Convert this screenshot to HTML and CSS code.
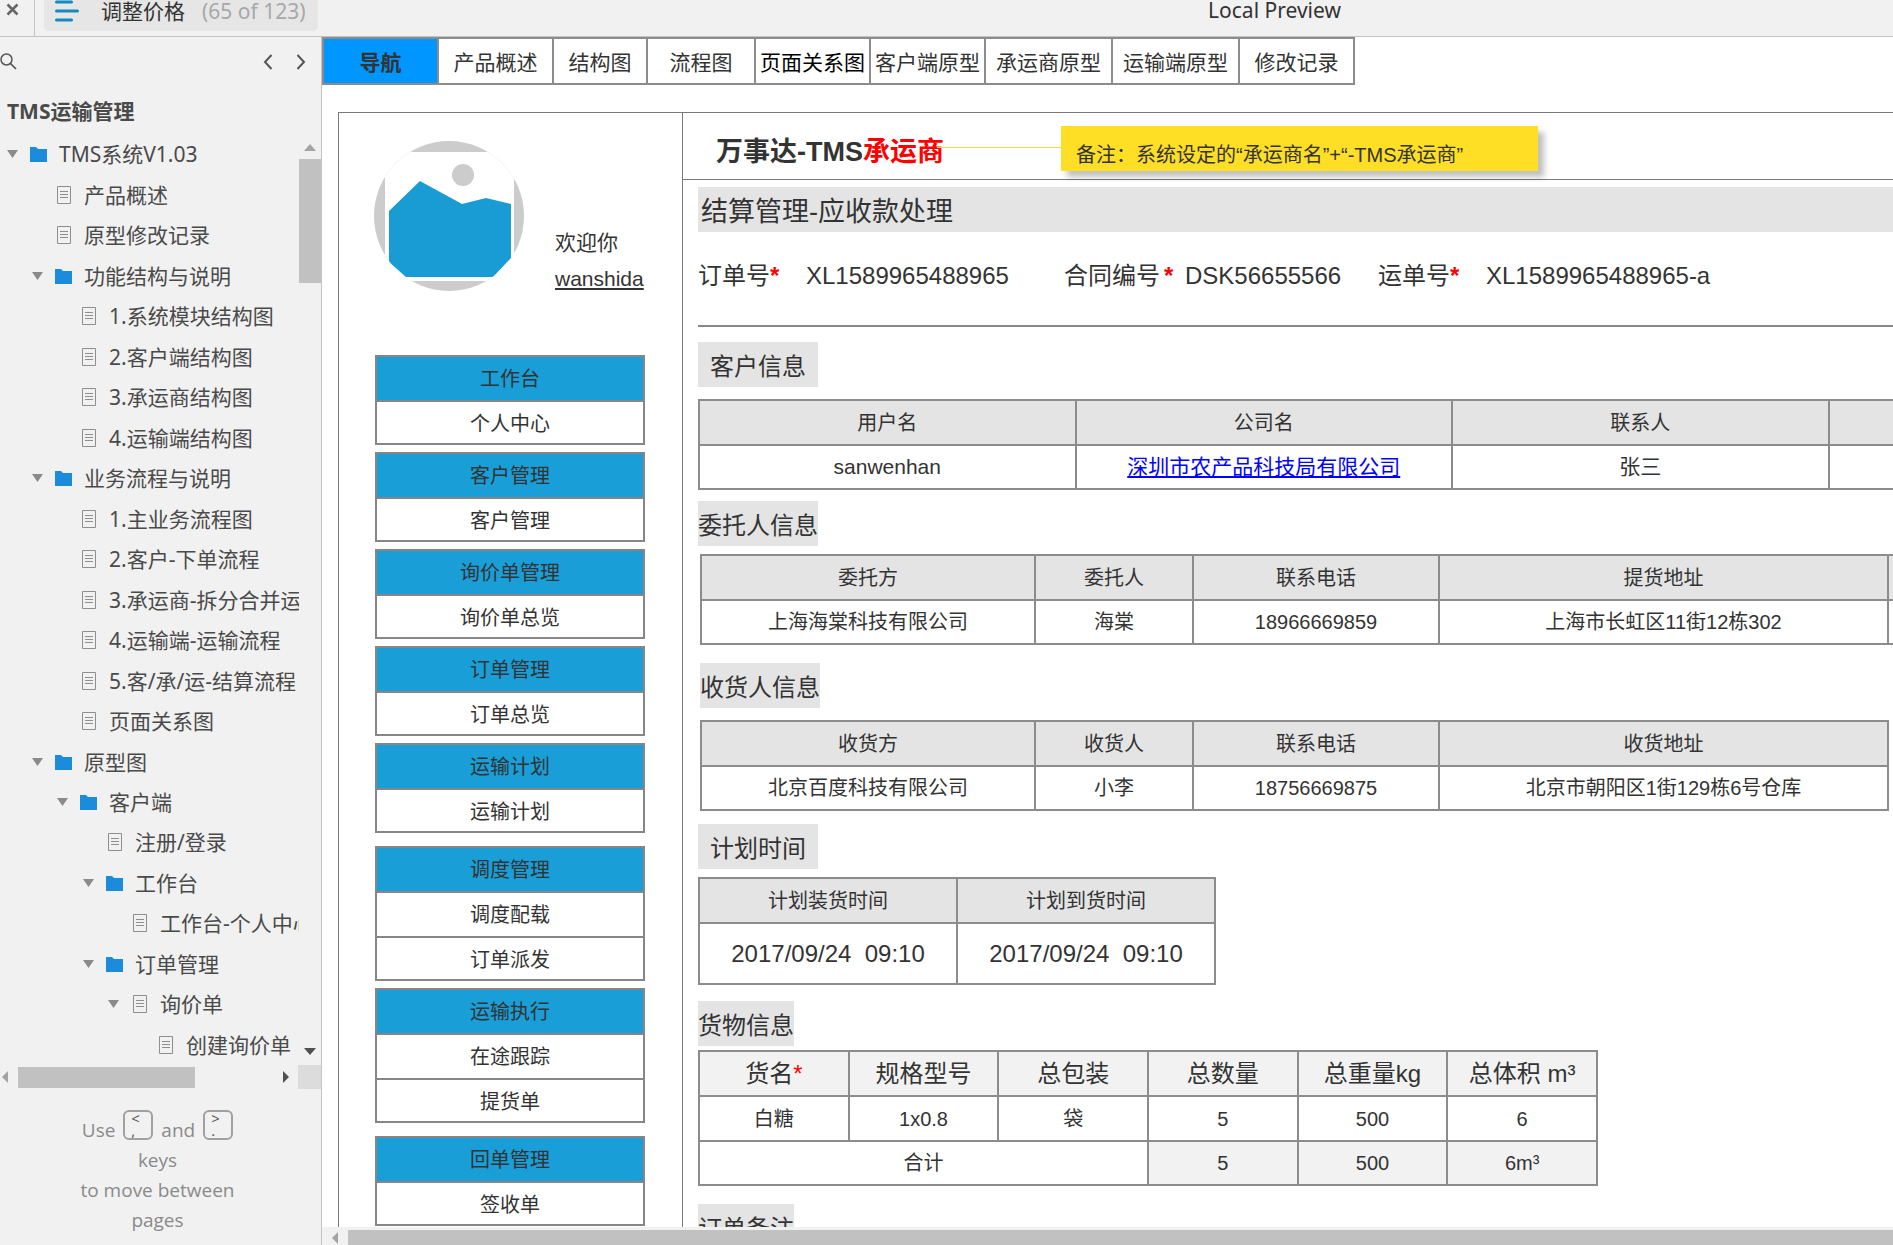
FILE: index.html
```html
<!DOCTYPE html>
<html lang="zh-CN">
<head>
<meta charset="utf-8">
<title>调整价格</title>
<link rel="stylesheet" href="styles.css">
</head>
<body>
<svg class="defs" aria-hidden="true">
  <symbol id="folder" viewBox="0 0 17 16"><path fill="#1a8cdb" d="M0 1h6l2 2h9v13H0z"/></symbol>
  <symbol id="page" viewBox="0 0 14 18"><path fill="none" stroke="#8e8e8e" d="M.5.5h13v17H.5zM3 5.500h8M3 8.500h8M3 11.500h8"/></symbol>
  <symbol id="caret" viewBox="0 0 11 8"><path fill="#8a8a8a" d="M0 0h11L5.500 8z"/></symbol>
</svg>

<header class="topbar">
  <button class="close" aria-label="关闭"><svg width="14" height="14" viewBox="0 0 14 14"><path d="M1.500 1.500l10 10M11.500 1.500l-10 10" stroke="#666" stroke-width="2.500"/></svg></button>
  <div class="pill">
    <svg width="24" height="24" viewBox="0 0 24 24"><path d="M1.500 3h15M1.500 12h21M1.500 21h15" stroke="#128ac4" stroke-width="3" stroke-linecap="round"/></svg>
    <span class="pill-name">调整价格</span>
    <span class="pill-count">(65 of 123)</span>
  </div>
  <div class="preview">Local Preview</div>
</header>

<div class="body">
  <aside class="sidebar">
    <div class="tools">
      <button class="tool" aria-label="搜索"><svg width="17" height="17" viewBox="0 0 17 17"><circle cx="6.500" cy="6.500" r="5.500" fill="none" stroke="#555" stroke-width="1.500"/><path d="M10.500 10.500l5.500 5.500" stroke="#555" stroke-width="1.700"/></svg></button>
      <button class="tool push" aria-label="上一页"><svg width="10" height="16" viewBox="0 0 10 16"><path d="M8.500 1L2 8l6.500 7" fill="none" stroke="#555" stroke-width="2"/></svg></button>
      <button class="tool" aria-label="下一页"><svg width="10" height="16" viewBox="0 0 10 16"><path d="M1.500 1L8 8l-6.500 7" fill="none" stroke="#555" stroke-width="2"/></svg></button>
    </div>
    <h1 class="project">TMS运输管理</h1>
    <div class="tree-area">
      <ul class="tree">
        <li class="l0"><svg class="caret"><use href="#caret"/></svg><svg class="folder"><use href="#folder"/></svg><a href="#">TMS系统V1.03</a></li>
        <li class="l1"><svg class="page"><use href="#page"/></svg><a href="#">产品概述</a></li>
        <li class="l1"><svg class="page"><use href="#page"/></svg><a href="#">原型修改记录</a></li>
        <li class="l1"><svg class="caret"><use href="#caret"/></svg><svg class="folder"><use href="#folder"/></svg><a href="#">功能结构与说明</a></li>
        <li class="l2"><svg class="page"><use href="#page"/></svg><a href="#">1.系统模块结构图</a></li>
        <li class="l2"><svg class="page"><use href="#page"/></svg><a href="#">2.客户端结构图</a></li>
        <li class="l2"><svg class="page"><use href="#page"/></svg><a href="#">3.承运商结构图</a></li>
        <li class="l2"><svg class="page"><use href="#page"/></svg><a href="#">4.运输端结构图</a></li>
        <li class="l1"><svg class="caret"><use href="#caret"/></svg><svg class="folder"><use href="#folder"/></svg><a href="#">业务流程与说明</a></li>
        <li class="l2"><svg class="page"><use href="#page"/></svg><a href="#">1.主业务流程图</a></li>
        <li class="l2"><svg class="page"><use href="#page"/></svg><a href="#">2.客户-下单流程</a></li>
        <li class="l2"><svg class="page"><use href="#page"/></svg><a href="#">3.承运商-拆分合并运</a></li>
        <li class="l2"><svg class="page"><use href="#page"/></svg><a href="#">4.运输端-运输流程</a></li>
        <li class="l2"><svg class="page"><use href="#page"/></svg><a href="#">5.客/承/运-结算流程</a></li>
        <li class="l2"><svg class="page"><use href="#page"/></svg><a href="#">页面关系图</a></li>
        <li class="l1"><svg class="caret"><use href="#caret"/></svg><svg class="folder"><use href="#folder"/></svg><a href="#">原型图</a></li>
        <li class="l2"><svg class="caret"><use href="#caret"/></svg><svg class="folder"><use href="#folder"/></svg><a href="#">客户端</a></li>
        <li class="l3"><svg class="page"><use href="#page"/></svg><a href="#">注册/登录</a></li>
        <li class="l3"><svg class="caret"><use href="#caret"/></svg><svg class="folder"><use href="#folder"/></svg><a href="#">工作台</a></li>
        <li class="l4"><svg class="page"><use href="#page"/></svg><a href="#">工作台-个人中心</a></li>
        <li class="l3"><svg class="caret"><use href="#caret"/></svg><svg class="folder"><use href="#folder"/></svg><a href="#">订单管理</a></li>
        <li class="l4"><svg class="caret"><use href="#caret"/></svg><svg class="page"><use href="#page"/></svg><a href="#">询价单</a></li>
        <li class="l5"><svg class="page"><use href="#page"/></svg><a href="#">创建询价单</a></li>
      </ul>
      <div class="vscroll">
        <svg width="12" height="7" viewBox="0 0 12 7"><path d="M0 7h12L6 0z" fill="#a3a3a3"/></svg>
        <div class="vthumb"></div>
        <svg width="12" height="7" viewBox="0 0 12 7"><path d="M0 0h12L6 7z" fill="#505050"/></svg>
      </div>
    </div>
    <div class="hscroll">
      <svg width="6" height="12" viewBox="0 0 6 12"><path d="M6 0v12L0 6z" fill="#a3a3a3"/></svg>
      <div class="hthumb"></div>
      <svg class="push" width="6" height="12" viewBox="0 0 6 12"><path d="M0 0v12l6-6z" fill="#505050"/></svg>
      <div class="corner"></div>
    </div>
    <div class="hint">
      <div class="hint-keys"><span>Use</span><kbd><span>&lt;</span><span>,</span></kbd><span>and</span><kbd><span>&gt;</span><span>.</span></kbd></div>
      <div>keys</div>
      <div>to move between</div>
      <div>pages</div>
    </div>
  </aside>

  <main class="main">
    <div class="canvas">
      <nav class="tabs">
        <a href="#" class="active">导航</a><a href="#" class="t-m">产品概述</a><a href="#" class="t-s">结构图</a><a href="#" class="t-r">流程图</a><a href="#" class="t-m dark">页面关系图</a><a href="#" class="t-m">客户端原型</a><a href="#" class="t-l">承运商原型</a><a href="#" class="t-l">运输端原型</a><a href="#" class="t-m">修改记录</a>
      </nav>
      <div class="frame">
        <aside class="menu">
          <div class="user">
            <svg class="avatar" width="150" height="150" viewBox="0 0 150 150">
              <defs><clipPath id="disc"><circle cx="75" cy="75" r="75"/></clipPath></defs>
              <g clip-path="url(#disc)">
                <path fill="#ccc" d="M0 0h150v150H0z"/>
                <path fill="#fff" d="M11 11h129v129H11z"/>
                <circle cx="89" cy="34" r="11" fill="#ccc"/>
                <path fill="#199cd4" d="M15 70l31-30 42 23 24-6 25 6v54l-18 19H32l-17-15z"/>
              </g>
            </svg>
            <div class="welcome"><span>欢迎你</span><a href="#">wanshida</a></div>
          </div>
          <div class="groups">
            <section class="group"><h2>工作台</h2><a href="#">个人中心</a></section>
            <section class="group"><h2>客户管理</h2><a href="#">客户管理</a></section>
            <section class="group"><h2>询价单管理</h2><a href="#">询价单总览</a></section>
            <section class="group"><h2>订单管理</h2><a href="#">订单总览</a></section>
            <section class="group apart"><h2>运输计划</h2><a href="#">运输计划</a></section>
            <section class="group"><h2>调度管理</h2><a href="#">调度配载</a><a href="#">订单派发</a></section>
            <section class="group apart"><h2>运输执行</h2><a href="#">在途跟踪</a><a href="#">提货单</a></section>
            <section class="group"><h2>回单管理</h2><a href="#">签收单</a></section>
          </div>
        </aside>

        <div class="content">
          <div class="brand">
            <strong>万事达-TMS<em>承运商</em></strong>
            <div class="note">备注：系统设定的“承运商名”+“-TMS承运商”</div>
          </div>
          <div class="sheet">
            <h2 class="title">结算管理-应收款处理</h2>
            <dl class="order">
              <div class="o-wide"><dt>订单号<b>*</b></dt><dd>XL1589965488965</dd></div>
              <div class="o-tight"><dt>合同编号<b>*</b></dt><dd>DSK56655566</dd></div>
              <div class="o-wide"><dt>运单号<b>*</b></dt><dd>XL1589965488965-a</dd></div>
            </dl>

            <h3 class="badge">客户信息</h3>
            <table class="grid customer">
              <tr><th>用户名</th><th>公司名</th><th>联系人</th><th></th></tr>
              <tr><td>sanwenhan</td><td><a href="#">深圳市农产品科技局有限公司</a></td><td>张三</td><td></td></tr>
            </table>

            <h3 class="badge near">委托人信息</h3>
            <table class="grid party sender">
              <tr><th class="c1">委托方</th><th class="c2">委托人</th><th class="c3">联系电话</th><th class="c4">提货地址</th><th class="c5"></th></tr>
              <tr><td>上海海棠科技有限公司</td><td>海棠</td><td>18966669859</td><td>上海市长虹区11街12栋302</td><td></td></tr>
            </table>

            <h3 class="badge inset">收货人信息</h3>
            <table class="grid party receiver">
              <tr><th class="c1">收货方</th><th class="c2">收货人</th><th class="c3">联系电话</th><th class="c4">收货地址</th></tr>
              <tr><td>北京百度科技有限公司</td><td>小李</td><td>18756669875</td><td>北京市朝阳区1街129栋6号仓库</td></tr>
            </table>

            <h3 class="badge near">计划时间</h3>
            <table class="grid plan">
              <tr><th>计划装货时间</th><th>计划到货时间</th></tr>
              <tr><td>2017/09/24&nbsp; 09:10</td><td>2017/09/24&nbsp; 09:10</td></tr>
            </table>

            <h3 class="badge small">货物信息</h3>
            <table class="grid goods">
              <tr><th>货名<i>*</i></th><th>规格型号</th><th>总包装</th><th>总数量</th><th>总重量kg</th><th>总体积 m³</th></tr>
              <tr><td>白糖</td><td>1x0.8</td><td>袋</td><td>5</td><td>500</td><td>6</td></tr>
              <tr><td colspan="3">合计</td><td class="sum">5</td><td class="sum">500</td><td class="sum">6m³</td></tr>
            </table>

            <h3 class="badge small">订单备注</h3>
          </div>
        </div>
      </div>
    </div>
    <div class="bottom-scroll">
      <svg width="6" height="12" viewBox="0 0 6 12"><path d="M6 0v12L0 6z" fill="#a3a3a3"/></svg>
      <div class="bottom-thumb"></div>
    </div>
  </main>
</div>
</body>
</html>
```
FILE: styles.css
```css
* { box-sizing: border-box; }

body {
  margin: 0;
  height: 100vh;
  overflow: hidden;
  display: flex;
  flex-direction: column;
  background: #fff;
  color: #333;
  font-family: "Liberation Sans", "Noto Sans CJK SC", sans-serif;
  font-size: 20px;
}

h1, h2, h3, ul, dl, dd { margin: 0; padding: 0; font-weight: normal; }
ul { list-style: none; }
a { color: inherit; text-decoration: none; }
button { border: 0; padding: 0; background: none; display: flex; }
svg { display: block; flex: none; }
.defs { position: absolute; width: 0; height: 0; }
.push { margin-left: auto; }

/* Top bar */
.topbar {
  flex: none;
  height: 37px;
  display: flex;
  background: #f1f1f1;
  border-bottom: 1px solid #c4c4c4;
  font-family: "Noto Sans", "Noto Sans CJK SC", sans-serif;
  font-size: 21px;
}
.close {
  width: 35px;
  height: 36px;
  padding: 3px 0 0 6px;
  border-right: 1px solid #c4c4c4;
}
.pill {
  width: 274px;
  height: 31px;
  margin-left: 9px;
  padding: 0 0 10px 11px;
  display: flex;
  align-items: center;
  background: #e6e6e6;
  border-radius: 0 0 5px 5px;
  line-height: 24px;
}
.pill-name { margin-left: 22px; }
.pill-count { margin-left: 17px; color: #a8a8a8; white-space: nowrap; }
.preview {
  flex: 1;
  padding-left: 338px;
  text-align: center;
  line-height: 21px;
}

.body { flex: 1; min-height: 0; display: flex; }

/* Sidebar */
.sidebar {
  flex: none;
  width: 322px;
  display: flex;
  flex-direction: column;
  background: #f1f1f1;
  border-right: 1px solid #c4c4c4;
  color: #4a4a4a;
  font-family: "Noto Sans", "Noto Sans CJK SC", sans-serif;
  font-size: 21px;
}
.tools {
  height: 49px;
  padding-right: 15px;
  display: flex;
  align-items: center;
  gap: 23px;
}
.project {
  height: 48px;
  padding-left: 7px;
  font-size: 21px;
  font-weight: bold;
  line-height: 50px;
}
.tree-area { flex: 1; min-height: 0; display: flex; }
.tree {
  flex: 1;
  min-width: 0;
  overflow: hidden;
  display: flex;
  flex-direction: column;
}
.tree li {
  flex: 1;
  min-height: 0;
  display: flex;
  align-items: center;
  white-space: nowrap;
}
.tree a { line-height: 30px; }
.tree .caret { width: 11px; height: 8px; margin-left: -23px; margin-right: 12px; }
.tree .folder { width: 17px; height: 16px; margin-right: 12px; }
.tree .page { width: 14px; height: 18px; margin-left: 2px; margin-right: 13px; }
.l0 { padding-left: 30px; }
.l1 { padding-left: 55px; }
.l2 { padding-left: 80px; }
.l3 { padding-left: 106px; }
.l4 { padding-left: 131px; }
.l5 { padding-left: 157px; }
.vscroll {
  flex: none;
  width: 22px;
  padding: 10px 0;
  display: flex;
  flex-direction: column;
  align-items: center;
  justify-content: space-between;
}
.vthumb { width: 100%; height: 124px; margin: 8px 0 auto; background: #c1c1c1; }
.hscroll { flex: none; height: 24px; display: flex; align-items: center; padding-left: 2px; }
.hthumb { width: 177px; height: 21px; margin-left: 10px; background: #c1c1c1; }
.corner { width: 23px; height: 24px; margin-left: 9px; background: #dcdcdc; }
.hint {
  flex: none;
  height: 156px;
  padding-top: 21px;
  padding-right: 6px;
  color: #8a8a8a;
  font-family: "Open Sans", sans-serif;
  font-size: 19px;
  line-height: 30px;
  text-align: center;
}
.hint-keys { display: flex; justify-content: center; gap: 8px; height: 35px; }
.hint-keys > span { padding-top: 5px; }
kbd {
  width: 30px;
  height: 30px;
  padding-left: 6px;
  display: flex;
  flex-direction: column;
  border: 2px solid #a0a0a0;
  border-radius: 6px;
  color: #555;
  font-family: "Open Sans", sans-serif;
  font-size: 15px;
  line-height: 12px;
  text-align: left;
}

/* Canvas */
.main { flex: 1; min-width: 0; display: flex; flex-direction: column; }
.canvas {
  flex: 1;
  min-height: 0;
  overflow: hidden;
  display: flex;
  flex-direction: column;
}
.tabs { flex: none; display: flex; height: 48px; margin-bottom: 27px; font-size: 21px; }
.tabs a {
  flex: none;
  border: 2px solid #8c8c8c;
  border-left-width: 0;
  line-height: 47px;
  text-align: center;
  white-space: nowrap;
}
.tabs .active { width: 117px; background: #0096ff; border-left-width: 2px; font-weight: bold; }
.tabs .dark { color: #000; }
.t-m { width: 115px; }
.t-s { width: 94px; }
.t-r { width: 108px; }
.t-l { width: 127px; }

.frame {
  flex: 1 0 auto;
  margin-left: 16px;
  display: flex;
  border: 1px solid #797979;
  border-width: 1px 0 0 1px;
}
.menu { flex: none; width: 344px; border-right: 1px solid #797979; }
.user { display: flex; padding: 28px 0 0 35px; height: 242px; }
.welcome {
  padding: 84px 0 0 31px;
  display: flex;
  flex-direction: column;
  font-size: 21px;
  line-height: 36px;
}
.welcome a { text-decoration: underline; }
.groups {
  padding-left: 36px;
  display: flex;
  flex-direction: column;
  gap: 7px;
}
.group { width: 270px; border: 2px solid #868686; }
.group.apart { margin-bottom: 6px; }
.group h2 { height: 43px; background: #199ed8; font-size: 20px; line-height: 45px; text-align: center; }
.group a { display: block; height: 45px; border-top: 2px solid #868686; line-height: 45px; text-align: center; }
.group a:last-child { height: 43px; }

.content { flex: 1; min-width: 0; }
.brand {
  position: relative;
  height: 67px;
  padding-left: 33px;
  border-bottom: 1px solid #797979;
  font-size: 27px;
  line-height: 78px;
}
.brand em { color: #f00; font-style: normal; }
.note {
  position: absolute;
  left: 378px;
  top: 13px;
  width: 477px;
  height: 45px;
  padding: 8px 0 0 15px;
  background: #ffdf25;
  box-shadow: 6px 6px 6px rgba(0, 0, 0, 0.25);
  font-size: 20px;
  line-height: 43px;
  white-space: nowrap;
}
.note::before {
  content: "";
  position: absolute;
  right: 100%;
  top: 21px;
  width: 124px;
  height: 1px;
  background: #f5d94a;
}

.sheet { padding: 7px 0 0 15px; }
.title {
  height: 45px;
  padding-left: 3px;
  background: #e4e4e4;
  font-size: 27px;
  line-height: 51px;
}
.order {
  display: flex;
  height: 95px;
  margin-bottom: 15px;
  border-bottom: 2px solid #868686;
  font-size: 24px;
  line-height: 88px;
  white-space: nowrap;
}
.order div { display: flex; }
.order b { color: #f00; }
.o-wide dt { width: 108px; }
.o-wide dd { width: 258px; }
.o-tight dt { width: 121px; }
.o-tight dd { width: 193px; }
.o-tight b { margin-left: 4px; }

.badge {
  width: 120px;
  height: 45px;
  margin-bottom: 12px;
  background: #e4e4e4;
  font-size: 24px;
  line-height: 49px;
  text-align: center;
  white-space: nowrap;
}
.badge.near { margin-bottom: 8px; }
.badge.inset { margin-left: 2px; }
.badge.small { width: 96px; margin-bottom: 4px; }

.grid {
  border-collapse: collapse;
  table-layout: fixed;
}
.grid th, .grid td {
  height: 45px;
  padding: 0;
  border: 2px solid #8c8c8c;
  font-size: 20px;
  font-weight: normal;
  line-height: 24px;
  text-align: center;
}
.grid th { background: #e4e4e4; }
.grid tr:last-child td { height: 44px; }
.customer { width: 1508px; margin-bottom: 11px; }
.customer td { font-size: 21px; }
.customer a { color: #00f; text-decoration: underline; }
.party { margin-left: 2px; }
.sender { width: 1389px; margin-bottom: 18px; }
.receiver { width: 1189px; margin-bottom: 13px; }
.c1 { width: 334px; }
.c2 { width: 158px; }
.c3 { width: 246px; }
.c4 { width: 449px; }
.plan { width: 518px; margin-bottom: 16px; }
.plan tr:last-child td { height: 61px; font-size: 24px; }
.goods { width: 900px; margin-bottom: 18px; }
.goods th { background: #f2f2f2; font-size: 24px; }
.goods .sum { background: #f2f2f2; }
.goods i { color: #f00; font-style: normal; }

.bottom-scroll {
  flex: none;
  height: 18px;
  padding: 3px 0 0 10px;
  display: flex;
  align-items: center;
  background: #f1f1f1;
}
.bottom-thumb { flex: 1; height: 15px; margin-left: 10px; background: #c1c1c1; }
```
